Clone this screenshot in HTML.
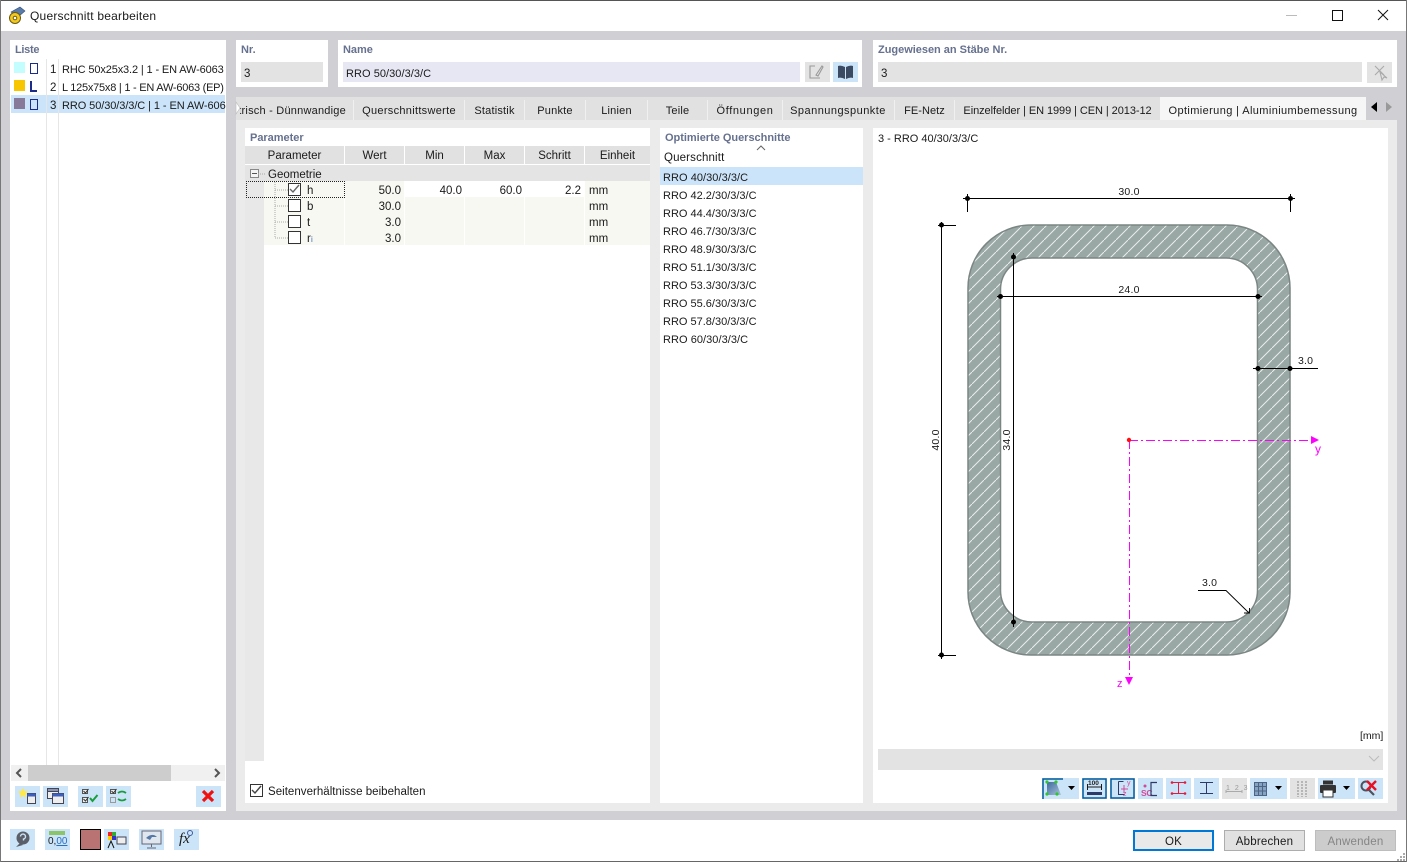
<!DOCTYPE html>
<html><head><meta charset="utf-8"><style>
html,body{margin:0;padding:0;width:1407px;height:862px;overflow:hidden;background:#fff}
body{position:relative;font:11.5px "Liberation Sans",sans-serif;color:#1a1a1a;letter-spacing:.2px}
.b{position:absolute}
.t{position:absolute;white-space:nowrap;line-height:14px;margin-top:1px}
.h{color:#66718f;font-weight:bold;font-size:11px;letter-spacing:-.02px}
.r{text-align:right}
.c{text-align:center}
.z{letter-spacing:0}
.l{font-size:11px;letter-spacing:0}
.ic{position:absolute;background:#cce4f7;width:25px;height:21px}
.gi{background:#e3e3e3}
.sep{position:absolute;top:100px;width:1px;height:20px;background:#f0f0f0}
.col{position:absolute;width:1px;background:#fff}
svg{position:absolute;left:0;top:0;overflow:visible}
</style></head><body>
<div class="b" style="left:0;top:31px;width:1407px;height:789px;background:#d0cfd4"></div>
<div class="b" style="left:0;top:0;width:1407px;height:1px;background:#555"></div>
<div class="b" style="left:0;top:861px;width:1407px;height:1px;background:#666"></div>
<div class="b" style="left:0;top:0;width:1px;height:862px;background:#777"></div>
<div class="b" style="left:1406px;top:0;width:1px;height:862px;background:#777"></div>
<div class="t" style="left:30px;top:8px;font-size:12px;letter-spacing:.22px">Querschnitt bearbeiten</div>

<!-- left panel -->
<div class="b" style="left:10px;top:40px;width:216px;height:771px;background:#fff"></div>
<div class="t h" style="left:15px;top:42px;letter-spacing:-.3px">Liste</div>
<div class="b" style="left:11px;top:95px;width:214px;height:18px;background:#cce4f9"></div>
<div class="b" style="left:46px;top:59px;width:1px;height:706px;background:#e6e6e6"></div>
<div class="b" style="left:58px;top:59px;width:1px;height:706px;background:#e6e6e6"></div>
<div class="b" style="left:14px;top:62px;width:11px;height:11px;background:#c4fdfd"></div>
<div class="b" style="left:14px;top:80px;width:11px;height:11px;background:#f7c600"></div>
<div class="b" style="left:14px;top:98px;width:11px;height:11px;background:#86799a"></div>
<div class="b" style="left:30px;top:63px;width:6px;height:9px;border:1px solid #1c2c8c"></div>
<div class="b" style="left:30px;top:81px;width:1px;height:10px;background:#1c2c8c;border-left:1px solid #1c2c8c"></div>
<div class="b" style="left:30px;top:90px;width:7px;height:1.5px;background:#1c2c8c"></div>
<div class="b" style="left:30px;top:99px;width:6px;height:9px;border:1px solid #1c2c8c"></div>
<div class="t" style="left:50px;top:62px">1</div>
<div class="t" style="left:50px;top:80px">2</div>
<div class="t" style="left:50px;top:98px">3</div>
<div class="t" style="left:62px;top:62px;font-size:11px;letter-spacing:-.13px">RHC 50x25x3.2 | 1 - EN AW-6063</div>
<div class="t" style="left:62px;top:80px;font-size:11px;letter-spacing:-.24px">L 125x75x8 | 1 - EN AW-6063 (EP)</div>
<div class="b" style="left:62px;top:97px;width:164px;height:16px;overflow:hidden"><div class="t" style="left:0;top:1px;font-size:11px;letter-spacing:-.08px">RRO 50/30/3/3/C | 1 - EN AW-6063</div></div>
<!-- scrollbar -->
<div class="b" style="left:11px;top:765px;width:214px;height:16px;background:#f0f0f0"></div>
<div class="b" style="left:28px;top:765px;width:143px;height:16px;background:#cdcdcd"></div>
<svg width="1407" height="862"><path d="M21 769l-4 4 4 4M215 769l4 4-4 4" fill="none" stroke="#555" stroke-width="2"/></svg>

<div class="ic" style="left:15px;top:786px"></div><div class="ic" style="left:43px;top:786px"></div>
<div class="ic" style="left:78px;top:786px"></div><div class="ic" style="left:106px;top:786px"></div>
<div class="ic" style="left:196px;top:786px"></div>

<!-- top panels -->
<div class="b" style="left:236px;top:40px;width:92px;height:47px;background:#fff"></div>
<div class="t h" style="left:241px;top:42px">Nr.</div>
<div class="b" style="left:241px;top:62px;width:82px;height:20px;background:#e3e3e3"></div>
<div class="t" style="left:244px;top:66px">3</div>
<div class="b" style="left:338px;top:40px;width:524px;height:47px;background:#fff"></div>
<div class="t h" style="left:343px;top:42px">Name</div>
<div class="b" style="left:343px;top:62px;width:457px;height:20px;background:#e6e7f3"></div>
<div class="t" style="left:346px;top:66px;font-size:11px;letter-spacing:.05px">RRO 50/30/3/3/C</div>
<div class="ic gi" style="left:805px;top:62px;height:20px"></div>
<div class="ic" style="left:833px;top:62px;height:20px"></div>
<div class="b" style="left:873px;top:40px;width:524px;height:47px;background:#fff"></div>
<div class="t h" style="left:878px;top:42px">Zugewiesen an Stäbe Nr.</div>
<div class="b" style="left:878px;top:62px;width:484px;height:20px;background:#e3e3e3"></div>
<div class="t" style="left:881px;top:66px">3</div>
<div class="ic gi" style="left:1367px;top:62px;height:21px"></div>

<!-- tabs -->
<div class="b" style="left:236px;top:97px;width:1161px;height:23px;background:#e1e1e1"></div>
<div class="b" style="left:236px;top:120px;width:1161px;height:691px;background:#ebebeb"></div>
<div class="b" style="left:1160px;top:97px;width:206px;height:23px;background:#f6f6f6"></div>
<div class="b" style="left:1366px;top:97px;width:31px;height:23px;background:#d0cfd4"></div>
<div class="b" style="left:240px;top:102px;width:113px;height:16px;overflow:hidden"><div class="t" style="right:7px;top:1px;font-size:11px;letter-spacing:.22px">Parametrisch - Dünnwandige</div></div>
<div class="t c" style="left:354px;top:103px;width:110px;font-size:11px;letter-spacing:.3px">Querschnittswerte</div>
<div class="t c" style="left:465px;top:103px;width:59px;font-size:11px">Statistik</div>
<div class="t c" style="left:525px;top:103px;width:60px;font-size:11px">Punkte</div>
<div class="t c" style="left:586px;top:103px;width:61px;font-size:11px">Linien</div>
<div class="t c" style="left:648px;top:103px;width:59px;font-size:11px">Teile</div>
<div class="t c" style="left:708px;top:103px;width:74px;font-size:11px;letter-spacing:.65px">Öffnungen</div>
<div class="t c" style="left:783px;top:103px;width:110px;font-size:11px;letter-spacing:.47px">Spannungspunkte</div>
<div class="t c" style="left:895px;top:103px;width:59px;font-size:11px;letter-spacing:.05px">FE-Netz</div>
<div class="t c" style="left:955px;top:103px;width:205px;font-size:11px;letter-spacing:-.07px">Einzelfelder | EN 1999 | CEN | 2013-12</div>
<div class="t c" style="left:1160px;top:103px;width:206px;font-size:11px;letter-spacing:.39px">Optimierung | Aluminiumbemessung</div>
<div class="sep" style="left:353px"></div><div class="sep" style="left:464px"></div><div class="sep" style="left:524px"></div><div class="sep" style="left:585px"></div><div class="sep" style="left:647px"></div><div class="sep" style="left:707px"></div><div class="sep" style="left:782px"></div><div class="sep" style="left:894px"></div><div class="sep" style="left:954px"></div>
<svg width="1407" height="862"><path d="M236 102l4 6-4 6z" fill="#fff" stroke="#bbb" stroke-width=".6"/></svg>

<!-- parameter panel -->
<div class="b" style="left:245px;top:128px;width:405px;height:675px;background:#fff"></div>
<div class="t h" style="left:250px;top:130px">Parameter</div>
<div class="b" style="left:245px;top:146px;width:405px;height:18px;background:#e1e1e1"></div>
<div class="b" style="left:245px;top:165px;width:405px;height:16px;background:#e4e4e4"></div>
<div class="b" style="left:245px;top:181px;width:19px;height:580px;background:#e8e8e8"></div>
<div class="b" style="left:264px;top:181px;width:386px;height:64px;background:#f8f8f2"></div>
<div class="b" style="left:405px;top:181px;width:180px;height:16px;background:#fff"></div>
<div class="col" style="left:344px;top:146px;height:18px"></div><div class="col" style="left:404px;top:146px;height:18px"></div><div class="col" style="left:464px;top:146px;height:18px"></div><div class="col" style="left:524px;top:146px;height:18px"></div><div class="col" style="left:584px;top:146px;height:18px"></div>
<div class="col" style="left:344px;top:181px;height:64px"></div><div class="col" style="left:404px;top:181px;height:64px"></div><div class="col" style="left:464px;top:181px;height:64px"></div><div class="col" style="left:524px;top:181px;height:64px"></div><div class="col" style="left:584px;top:181px;height:64px"></div>
<div class="b" style="left:245px;top:164px;width:405px;height:1px;background:#fff"></div>
<div class="t c z" style="left:245px;top:148px;width:99px">Parameter</div>
<div class="t c z" style="left:345px;top:148px;width:59px">Wert</div>
<div class="t c z" style="left:405px;top:148px;width:59px">Min</div>
<div class="t c z" style="left:465px;top:148px;width:59px">Max</div>
<div class="t c z" style="left:525px;top:148px;width:59px">Schritt</div>
<div class="t c z" style="left:585px;top:148px;width:65px">Einheit</div>
<div class="b" style="left:250px;top:169px;width:7px;height:7px;border:1px solid #888;background:#f4f4f4"></div>
<div class="b" style="left:252px;top:173px;width:5px;height:1px;background:#555"></div>
<div class="t z" style="left:268px;top:167px">Geometrie</div>
<div class="b" style="left:246px;top:181px;width:97px;height:15px;border:1px dotted #222"></div>
<svg width="1407" height="862"><path d="M258 174h7M275 182v56M275 190h13M275 206h13M275 222h13M275 238h13" fill="none" stroke="#aaa" stroke-dasharray="1 1"/></svg>
<div class="b" style="left:288px;top:183px;width:11px;height:11px;border:1px solid #333;background:#fff"></div>
<div class="b" style="left:288px;top:199px;width:11px;height:11px;border:1px solid #333;background:#fff"></div>
<div class="b" style="left:288px;top:215px;width:11px;height:11px;border:1px solid #333;background:#fff"></div>
<div class="b" style="left:288px;top:231px;width:11px;height:11px;border:1px solid #333;background:#fff"></div>
<svg width="1407" height="862"><path d="M290 189l3 3 6-7" fill="none" stroke="#666" stroke-width="1.4"/></svg>
<div class="t" style="left:307px;top:183px">h</div>
<div class="t" style="left:307px;top:199px">b</div>
<div class="t" style="left:307px;top:215px">t</div>
<div class="t" style="left:307px;top:231px">r<span style="font-size:8px;color:#3a6ab0;letter-spacing:0">i</span></div>
<div class="t r z" style="left:345px;top:183px;width:56px">50.0</div>
<div class="t r z" style="left:345px;top:199px;width:56px">30.0</div>
<div class="t r z" style="left:345px;top:215px;width:56px">3.0</div>
<div class="t r z" style="left:345px;top:231px;width:56px">3.0</div>
<div class="t r z" style="left:406px;top:183px;width:56px">40.0</div>
<div class="t r z" style="left:466px;top:183px;width:56px">60.0</div>
<div class="t r z" style="left:525px;top:183px;width:56px">2.2</div>
<div class="t z" style="left:589px;top:183px">mm</div>
<div class="t z" style="left:589px;top:199px">mm</div>
<div class="t z" style="left:589px;top:215px">mm</div>
<div class="t z" style="left:589px;top:231px">mm</div>
<div class="b" style="left:250px;top:784px;width:11px;height:11px;border:1px solid #333"></div>
<svg width="1407" height="862"><path d="M252 790l3 3 6-7" fill="none" stroke="#444" stroke-width="1.4"/></svg>
<div class="t" style="left:268px;top:784px;letter-spacing:.03px">Seitenverhältnisse beibehalten</div>

<!-- optimised list -->
<div class="b" style="left:660px;top:128px;width:203px;height:675px;background:#fff"></div>
<div class="t h" style="left:665px;top:130px">Optimierte Querschnitte</div>
<svg width="1407" height="862"><path d="M757 150l4-4 4 4" fill="none" stroke="#666"/></svg>
<div class="t" style="left:664px;top:150px;letter-spacing:.15px">Querschnitt</div>
<div class="b" style="left:660px;top:167px;width:203px;height:18px;background:#cce4f9"></div>
<div class="t l" style="left:663px;top:170px;letter-spacing:.05px">RRO 40/30/3/3/C</div>
<div class="t l" style="left:663px;top:188px">RRO 42.2/30/3/3/C</div>
<div class="t l" style="left:663px;top:206px">RRO 44.4/30/3/3/C</div>
<div class="t l" style="left:663px;top:224px">RRO 46.7/30/3/3/C</div>
<div class="t l" style="left:663px;top:242px">RRO 48.9/30/3/3/C</div>
<div class="t l" style="left:663px;top:260px">RRO 51.1/30/3/3/C</div>
<div class="t l" style="left:663px;top:278px">RRO 53.3/30/3/3/C</div>
<div class="t l" style="left:663px;top:296px">RRO 55.6/30/3/3/C</div>
<div class="t l" style="left:663px;top:314px">RRO 57.8/30/3/3/C</div>
<div class="t l" style="left:663px;top:332px;letter-spacing:.05px">RRO 60/30/3/3/C</div>

<!-- drawing panel -->
<div class="b" style="left:873px;top:128px;width:515px;height:675px;background:#fff"></div>
<div class="t l" style="left:878px;top:131px">3 - RRO 40/30/3/3/C</div>
<div class="t" style="left:1360px;top:728px;font-size:10.5px;letter-spacing:0">[mm]</div>
<div class="b" style="left:878px;top:749px;width:505px;height:21px;background:#e3e3e3"></div>
<svg width="1407" height="862">
<defs><pattern id="ha" patternUnits="userSpaceOnUse" width="12" height="12"><rect width="12" height="12" fill="#99a8a5"/><path d="M-1 13L13 -1" stroke="#e8eeec" stroke-width="1"/></pattern>
<linearGradient id="gr" x1="0" y1="0" x2="1" y2="1"><stop offset="0" stop-color="#3f6a9c"/><stop offset="1" stop-color="#a9c2dd"/></linearGradient></defs>
<path fill-rule="evenodd" fill="url(#ha)" stroke="#7b8684" stroke-width="1.5" d="M1031 225H1227A63 63 0 0 1 1290 288V592A63 63 0 0 1 1227 655H1031A63 63 0 0 1 968 592V288A63 63 0 0 1 1031 225ZM1032 258A31.500 31.500 0 0 0 1000.500 289.500V590.500A31.500 31.500 0 0 0 1032 622H1226A31.500 31.500 0 0 0 1257.500 590.500V289.500A31.500 31.500 0 0 0 1226 258Z"/>
<g stroke="#000" fill="none" shape-rendering="crispEdges">
<path d="M963 198.500H1295M967.500 194V212M1290.500 194V212"/>
<path d="M938 225.500H956M938 655.500H956M941.500 222V659"/>
<path d="M997 296.500H1262"/>
<path d="M1013.500 253V627"/>
<path d="M1253 368.500H1318"/>
</g>
<path d="M1198 590.500H1226L1249 613M1244 613h5.500v-5" fill="none" stroke="#000" stroke-width=".9"/>
<g fill="#000"><circle cx="967.500" cy="198.500" r="2.500"/><circle cx="1290.500" cy="198.500" r="2.500"/><circle cx="941.500" cy="225" r="2.500"/><circle cx="941.500" cy="655" r="2.500"/><circle cx="1000.500" cy="296.500" r="2.500"/><circle cx="1258" cy="296.500" r="2.500"/><circle cx="1013.500" cy="257" r="2.500"/><circle cx="1013.500" cy="622" r="2.500"/><circle cx="1258" cy="368.500" r="2.500"/><circle cx="1290" cy="368.500" r="2.500"/></g>
<path d="M1129 440.500H1312" fill="none" stroke="#ff00ff" stroke-width="1" stroke-dasharray="9 3 2 3" shape-rendering="crispEdges"/>
<path d="M1129.500 440V677" fill="none" stroke="#ff00ff" stroke-width="1" stroke-dasharray="9 3 2 3" shape-rendering="crispEdges"/>
<path d="M1311 436l8 4-8 4zM1125 677h8l-4 8z" fill="#ff00ff"/>
<circle cx="1129" cy="440" r="2.200" fill="#f11"/>
</svg>
<div class="t c" style="left:1108px;top:184px;width:42px;font-size:10.5px">30.0</div>
<div class="t c" style="left:1108px;top:282px;width:42px;font-size:10.5px">24.0</div>
<div class="t" style="left:1298px;top:353px;font-size:10.5px">3.0</div>
<div class="t" style="left:1202px;top:575px;font-size:10.5px">3.0</div>
<div class="t c" style="left:915px;top:432px;width:42px;font-size:10.5px;transform:rotate(-90deg)">40.0</div>
<div class="t c" style="left:986px;top:432px;width:42px;font-size:10.5px;transform:rotate(-90deg)">34.0</div>
<div class="t" style="left:1315px;top:441px;color:#f0f;font-size:12px">y</div>
<div class="t" style="left:1117px;top:676px;color:#f0f;font-size:11px">z</div>
<svg width="1407" height="862"><path d="M1369 756l5 5 5-5" fill="none" stroke="#bbb"/></svg>

<!-- drawing toolbar -->
<div class="ic" style="left:1042px;top:778px;width:37px"></div>
<div class="ic" style="left:1082px;top:778px"></div>
<div class="ic" style="left:1110px;top:778px"></div>
<div class="ic" style="left:1138px;top:778px"></div>
<div class="ic" style="left:1166px;top:778px"></div>
<div class="ic" style="left:1194px;top:778px"></div>
<div class="ic gi" style="left:1222px;top:778px"></div>
<div class="ic" style="left:1250px;top:778px;width:37px"></div>
<div class="ic gi" style="left:1290px;top:778px"></div>
<div class="ic" style="left:1318px;top:778px;width:37px"></div>
<div class="ic" style="left:1358px;top:778px"></div>
<div class="t" style="left:1226px;top:781px;font-size:7px;color:#999;letter-spacing:1.500px">1 2 3</div>
<div class="t" style="left:1088px;top:776px;font-size:6.5px;font-weight:bold;letter-spacing:0;color:#222">100</div>
<div class="t" style="left:1141px;top:785px;font-size:8.5px;font-weight:bold;letter-spacing:-.3px;color:#d34a9a">SC</div>
<div class="t" style="left:1127px;top:776px;font-size:7px;letter-spacing:0;color:#d34a9a">y</div>
<div class="t" style="left:1123px;top:787px;font-size:7px;letter-spacing:0;color:#d34a9a">z</div>
<svg width="1407" height="862">
<path d="M1043 799V779H1063M1083 779h23v19h-23zM1111 779h23v19h-23z" fill="none" stroke="#005a9e" stroke-width="1.500"/>
<path d="M1047 782h9l5 13h-14z" fill="url(#gr)"/>
<g fill="#2fc72f"><circle cx="1047" cy="782" r="1.600"/><circle cx="1056" cy="782" r="1.600"/><circle cx="1047" cy="794" r="1.600"/><circle cx="1057" cy="794" r="1.600"/></g>
<path d="M1068 786h7l-3.500 4zM1275 786h7l-3.500 4zM1343 786h7l-3.500 4z" fill="#000"/>
<path d="M1087 787h15M1087.500 784v6M1101.500 784v6" stroke="#1a1a1a" fill="none"/><rect x="1087" y="792" width="15" height="3" fill="#2b3a67"/>
<path d="M1118.500 781.500h5M1118.500 781.500v13h6" stroke="#2b3a67" fill="none"/><path d="M1121 789h7M1124 785v8" stroke="#d34a9a" fill="none"/>
<path d="M1157 782.500h-6v13h6" stroke="#2b3a67" fill="none" stroke-width="1.200"/><circle cx="1145" cy="786" r="1.500" fill="#d34a9a"/>
<path d="M1172 782.500h13M1172 793.500h13M1178.500 782v12" stroke="#e21b3c" fill="none"/><g fill="#e21b3c"><circle cx="1172" cy="782.500" r="1.300"/><circle cx="1185" cy="782.500" r="1.300"/><circle cx="1172" cy="793.500" r="1.300"/><circle cx="1185" cy="793.500" r="1.300"/></g>
<path d="M1200 782.500h13M1200 793.500h13M1206.500 782v12" stroke="#2b3a67" fill="none"/>
<path d="M1226 791.500h16M1226 790v3M1242 790v3" stroke="#aaa" fill="none"/>
<rect x="1254.500" y="782.500" width="12" height="13" fill="#86a3c4" stroke="#4c6583"/><path d="M1258.500 782v13M1262.500 782v13M1254 786.500h12M1254 791h12" stroke="#4c6583" fill="none"/>
<path d="M1298 781v16M1302 781v16M1306 781v16" stroke="#888" stroke-dasharray="2 1" fill="none"/>
<rect x="1320" y="785" width="16" height="8" rx="1" fill="#333"/><rect x="1323" y="780.500" width="10" height="4" fill="#333"/><rect x="1323" y="790" width="10" height="7" fill="#fff" stroke="#333"/>
<circle cx="1366" cy="786" r="4.500" fill="none" stroke="#4d5260" stroke-width="2"/><path d="M1369 790l5 5" stroke="#4d5260" stroke-width="2.200"/><path d="M1367 781l9 9M1376 781l-9 9" stroke="#e81123" stroke-width="2.400"/>
<!-- name buttons -->
<path d="M815 66h-5v12h10M816 75l6-9 1 1-5 9z" fill="none" stroke="#999" stroke-width="1.100"/>
<path d="M838 66q3-1 7 1v12q-4-2-7-1zM853 66q-3-1-7 1v12q4-2 7-1z" fill="#3b4a63"/>
<path d="M1375 66l9 9M1384 66l-9 9M1380 72l2 8 2-3 3 1z" fill="none" stroke="#aaa" stroke-width="1.100"/>
<!-- tab arrows -->
<path d="M1377 102v10l-6-5z" fill="#000"/><path d="M1386 102v10l6-5z" fill="#999"/>
<!-- left panel icons -->
<rect x="27.500" y="793.500" width="8" height="10" fill="#eee" stroke="#445"/><rect x="27.500" y="793.500" width="8" height="3" fill="#3d5fc0"/><path d="M23 788l1.500 3 3.500.5-2.500 2.500.6 3.500-3.100-1.700-3.100 1.700.6-3.500-2.500-2.500 3.500-.5z" fill="#ffe84a"/>
<rect x="47.500" y="788.500" width="11" height="10" fill="#eee" stroke="#445"/><rect x="47.500" y="788.500" width="11" height="3" fill="#8a98b8" stroke="#445"/><rect x="52.500" y="793.500" width="11" height="10" fill="#eee" stroke="#445"/><rect x="52.500" y="793.500" width="11" height="3" fill="#3d5fc0"/>
<path d="M82.500 789.500h5v4h-5zM82.500 797.500h5v5h-5z" fill="#eee" stroke="#555"/><path d="M83.500 791l2 2 3-4M83.500 799l2 2 3-4" fill="none" stroke="#333"/><path d="M90 798l2.500 3 5-6" fill="none" stroke="#1a9c3e" stroke-width="2"/>
<path d="M110.500 789.500h5v4h-5z" fill="#eee" stroke="#555"/><path d="M110.500 797.500h5v5h-5z" fill="none" stroke="#999"/><path d="M111.500 791l2 2 3-4" fill="none" stroke="#333"/><path d="M118 793q4-3 8 0M126 799q-4 3-8 0" fill="none" stroke="#1a9c3e" stroke-width="1.800"/>
<path d="M203 791l10 10M213 791l-10 10" stroke="#f01010" stroke-width="3.200"/>
<!-- title icon -->
<path d="M11 12l9-5 5 4-7 6z" fill="#5a7aa8" stroke="#35507a" stroke-width=".6"/><circle cx="15" cy="18" r="5.500" fill="#f2c91e" stroke="#6b5a10"/><circle cx="15" cy="18" r="1.800" fill="#fff" stroke="#6b5a10"/>
<!-- window buttons -->
<path d="M1286 15.500h11" stroke="#bbb"/><rect x="1332.500" y="10.500" width="10" height="10" fill="none" stroke="#111"/><path d="M1378 10l10 10M1388 10l-10 10" stroke="#111"/>
<!-- grip -->
<path d="M1403 853h2v2h-2zM1400 856h2v2h-2zM1403 856h2v2h-2zM1397 859h2v2h-2zM1400 859h2v2h-2zM1403 859h2v2h-2z" fill="#aaa"/>
</svg>

<!-- footer -->
<div class="ic" style="left:10px;top:829px"></div>
<div class="ic" style="left:45px;top:829px"></div>
<div class="b" style="left:80px;top:829px;width:19px;height:19px;background:#b97373;border:1px solid #000"></div>
<div class="ic" style="left:104px;top:829px"></div>
<div class="ic" style="left:139px;top:829px"></div>
<div class="ic" style="left:174px;top:829px"></div>
<div class="t" style="left:48px;top:834px;font-size:10px;letter-spacing:0">0,<span style="color:#2a6fc0;text-decoration:underline">00</span></div>
<div class="t" style="left:179px;top:830px;font:italic 15px 'Liberation Serif',serif;letter-spacing:0">fx</div>
<svg width="1407" height="862">
<circle cx="23" cy="838" r="6.500" fill="#5a5f69"/><path d="M16 847l4-4 3 2z" fill="#5a5f69"/><path d="M20.500 836.500a2.500 2.500 0 1 1 3 2.500v1.500" fill="none" stroke="#cce4f7" stroke-width="1.400"/>
<rect x="49" y="831" width="16" height="4" fill="#8cc46a"/>
<rect x="108" y="832" width="4" height="4" fill="#e22"/><rect x="112" y="832" width="4" height="4" fill="#3a3"/><rect x="108" y="836" width="4" height="4" fill="#fc0"/><rect x="112" y="836" width="4" height="4" fill="#33c"/><rect x="117" y="837" width="9" height="7" fill="#eee" stroke="#445"/><path d="M108 848l3-7 3 7" fill="none" stroke="#111"/>
<rect x="142" y="831" width="19" height="13" fill="#dfe6ee" stroke="#667"/><path d="M146 838c4-4 8-4 11-1l-5 0-2 3z" fill="#5577a5"/><path d="M151.500 844v3M147 848h9" stroke="#667"/>
<circle cx="190" cy="833" r="2.500" fill="none" stroke="#3d5a9a"/>
</svg>
<div class="b" style="left:1133px;top:830px;width:77px;height:17px;border:2px solid #0078d7;background:#e9e9e9"></div>
<div class="t c" style="left:1133px;top:834px;width:81px">OK</div>
<div class="b" style="left:1224px;top:830px;width:79px;height:19px;border:1px solid #adadad;background:#e1e1e1"></div>
<div class="t c" style="left:1224px;top:834px;width:81px">Abbrechen</div>
<div class="b" style="left:1315px;top:830px;width:79px;height:19px;border:1px solid #bdbdbd;background:#ccc"></div>
<div class="t c" style="left:1315px;top:834px;width:81px;color:#858585">Anwenden</div>
</body></html>
